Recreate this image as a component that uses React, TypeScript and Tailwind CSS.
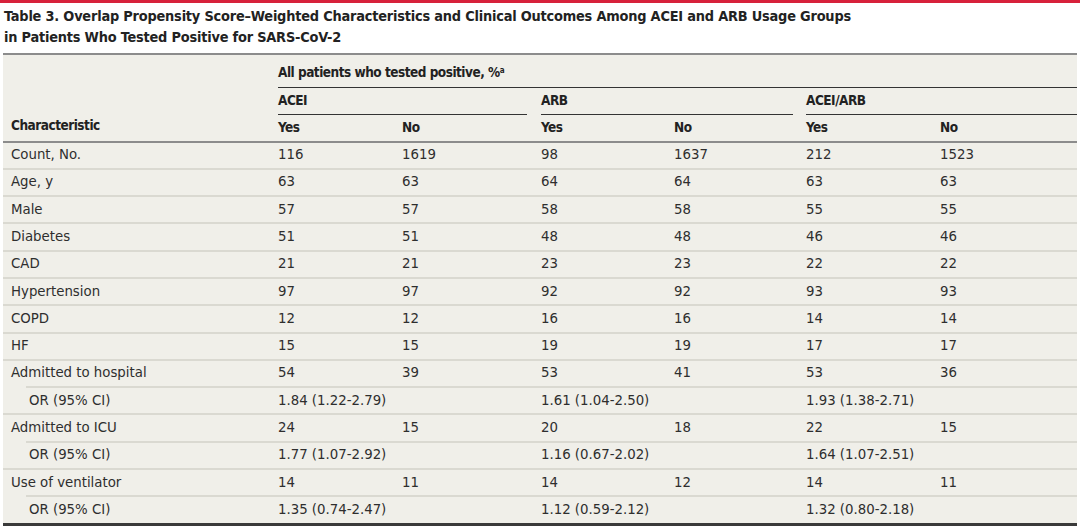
const rows: { label: string; vals: string[]; or?: boolean }[] = [
  { label: 'Count, No.', vals: ['116', '1619', '98', '1637', '212', '1523'] },
  { label: 'Age, y', vals: ['63', '63', '64', '64', '63', '63'] },
  { label: 'Male', vals: ['57', '57', '58', '58', '55', '55'] },
  { label: 'Diabetes', vals: ['51', '51', '48', '48', '46', '46'] },
  { label: 'CAD', vals: ['21', '21', '23', '23', '22', '22'] },
  { label: 'Hypertension', vals: ['97', '97', '92', '92', '93', '93'] },
  { label: 'COPD', vals: ['12', '12', '16', '16', '14', '14'] },
  { label: 'HF', vals: ['15', '15', '19', '19', '17', '17'] },
  { label: 'Admitted to hospital', vals: ['54', '39', '53', '41', '53', '36'] },
  { label: 'OR (95% CI)', vals: ['1.84 (1.22-2.79)', '', '1.61 (1.04-2.50)', '', '1.93 (1.38-2.71)', ''], or: true },
  { label: 'Admitted to ICU', vals: ['24', '15', '20', '18', '22', '15'] },
  { label: 'OR (95% CI)', vals: ['1.77 (1.07-2.92)', '', '1.16 (0.67-2.02)', '', '1.64 (1.07-2.51)', ''], or: true },
  { label: 'Use of ventilator', vals: ['14', '11', '14', '12', '14', '11'] },
  { label: 'OR (95% CI)', vals: ['1.35 (0.74-2.47)', '', '1.12 (0.59-2.12)', '', '1.32 (0.80-2.18)', ''], or: true },
];

const grid = 'grid grid-cols-[275px_124px_139px_133px_132px_134px_1fr]';

export default function App() {
  return (
    <div
      className="w-[1080px] h-[527px] bg-white overflow-hidden text-[#2e2e2e]"
      style={{ fontFamily: '"DejaVu Sans Condensed", "DejaVu Sans", sans-serif' }}
    >
      <div className="h-[3px] bg-[#d7213b]" />
      <h1 className="px-[4px] pt-[3px] text-[14.4px] leading-[21px] font-bold text-[#222] tracking-[-0.2px]">
        Table 3. Overlap Propensity Score–Weighted Characteristics and Clinical Outcomes Among ACEI and ARB Usage Groups
        <br />
        in Patients Who Tested Positive for SARS-CoV-2
      </h1>

      <div className="mt-[5px] mx-[3px] border-t-2 border-[#8c8c8c] bg-[#f0efe9] text-[14.8px]">
        {/* header */}
        <div className={`${grid} font-bold text-[#222] text-[13.5px] tracking-[-0.5px]`}>
          <div className="row-span-3 flex items-end pl-[8px] pb-[5px]">Characteristic</div>
          <div className="col-span-6 h-[32.5px] flex items-end pb-[4px] border-b-[1.5px] border-[#333]">
            <span>
              All patients who tested positive, %<sup className="text-[8px] font-bold">a</sup>
            </span>
          </div>
          <div className="col-span-2 mr-[14px] h-[27px] flex items-end pb-[3px] border-b-[1.5px] border-[#333]">ACEI</div>
          <div className="col-span-2 mr-[13px] h-[27px] flex items-end pb-[3px] border-b-[1.5px] border-[#333]">ARB</div>
          <div className="col-span-2 h-[27px] flex items-end pb-[3px] border-b-[1.5px] border-[#333]">ACEI/ARB</div>
          {['Yes', 'No', 'Yes', 'No', 'Yes', 'No'].map((t, i) => (
            <div key={i} className="h-[26px] flex items-center">
              {t}
            </div>
          ))}
        </div>

        {/* body */}
        <div className="border-t-2 border-[#8c8c8c] border-b-[3px] border-b-[#3a3a3a]">
          {rows.map((r, i) => (
            <div key={i}>
              {i > 0 && <div className={`h-[2px] bg-[#dad9d1] ${r.or ? 'ml-[23px]' : ''}`} />}
              <div className={`${grid} h-[25.3px] items-center pb-[2px]`}>
                <div className={r.or ? 'pl-[26px]' : 'pl-[8px]'}>{r.label}</div>
                {r.vals.map((v, j) => (
                  <div key={j} className="whitespace-nowrap">
                    {v}
                  </div>
                ))}
              </div>
            </div>
          ))}
        </div>
      </div>
    </div>
  );
}
